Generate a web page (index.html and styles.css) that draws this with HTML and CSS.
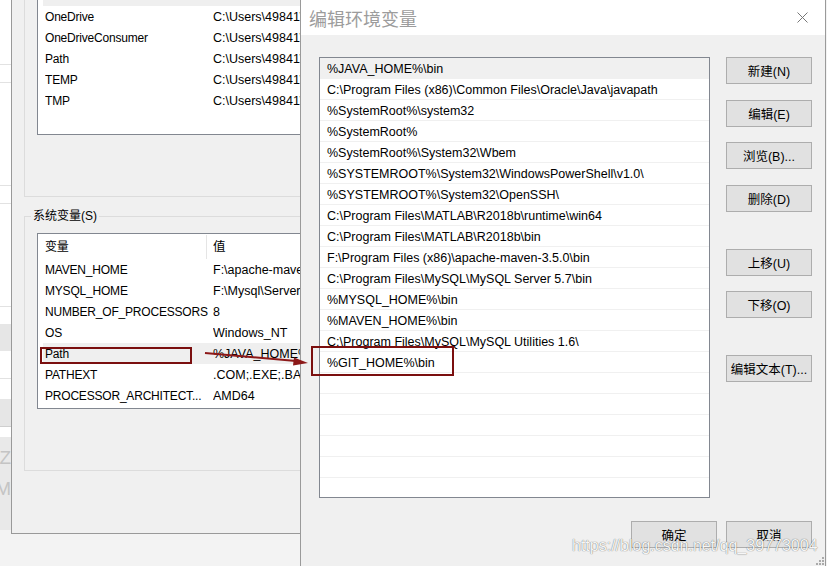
FILE: index.html
```html
<!DOCTYPE html>
<html lang="zh-CN">
<head>
    <meta charset="UTF-8">
    <title>编辑环境变量</title>
    <link rel="stylesheet" href="styles.css">
</head>
<body>
    <div class="far-window">
        <div class="band line" style="height:64px"></div>
        <div class="band line" style="height:17px"></div>
        <div class="band line" style="height:102px"></div>
        <div class="band line" style="height:17px"></div>
        <div class="band line" style="height:102px"></div>
        <div class="band" style="height:17px"></div>
        <div class="band grey" style="height:27px"></div>
        <div class="band line" style="height:27px"></div>
        <div class="band" style="height:20px"></div>
        <div class="band grey line-dark" style="height:27px"></div>
        <div class="band" style="height:10px"></div>
        <div class="band faded">
            <div class="ghost">Z</div>
            <div class="ghost">zM</div>
        </div>
    </div>

    <div class="env-window">
        <div class="user-group">
            <div class="varlist user-list">
                <div class="row sel"><span>HOME</span><span class="val">C:\Users\49841\</span></div>
                <div class="row"><span>OneDrive</span><span class="val">C:\Users\49841\OneDrive</span></div>
                <div class="row"><span>OneDriveConsumer</span><span class="val">C:\Users\49841\OneDrive</span></div>
                <div class="row"><span>Path</span><span class="val">C:\Users\49841\AppData\Local</span></div>
                <div class="row"><span>TEMP</span><span class="val">C:\Users\49841\AppData\Local\Temp</span></div>
                <div class="row"><span>TMP</span><span class="val">C:\Users\49841\AppData\Local\Temp</span></div>
            </div>
        </div>

        <fieldset class="sys-group">
            <legend>系统变量(S)</legend>
            <div class="varlist sys-list">
                <div class="row head"><span class="col">变量</span><span class="val">值</span></div>
                <div class="row"><span>MAVEN_HOME</span><span class="val">F:\apache-maven-3.5.0</span></div>
                <div class="row"><span>MYSQL_HOME</span><span class="val">F:\Mysql\Server 5.7</span></div>
                <div class="row"><span>NUMBER_OF_PROCESSORS</span><span class="val">8</span></div>
                <div class="row"><span>OS</span><span class="val">Windows_NT</span></div>
                <div class="row sel"><span>Path</span><span class="val">%JAVA_HOME%\bin;C:\Program Files</span></div>
                <div class="row"><span>PATHEXT</span><span class="val">.COM;.EXE;.BAT;.CMD;.VBS</span></div>
                <div class="row"><span>PROCESSOR_ARCHITECT...</span><span class="val">AMD64</span></div>
            </div>
        </fieldset>
    </div>

    <div class="dialog">
        <div class="titlebar">
            <span class="title">编辑环境变量</span>
            <svg class="close" width="11" height="11" viewBox="0 0 11 11">
                <path d="M0.5 0.5 L10.5 10.5 M10.5 0.5 L0.5 10.5" stroke="#777" stroke-width="1" fill="none"/>
            </svg>
        </div>
        <div class="dialog-body">
            <div class="path-list">
                <div class="path-row sel">%JAVA_HOME%\bin</div>
                <div class="path-row">C:\Program Files (x86)\Common Files\Oracle\Java\javapath</div>
                <div class="path-row">%SystemRoot%\system32</div>
                <div class="path-row">%SystemRoot%</div>
                <div class="path-row">%SystemRoot%\System32\Wbem</div>
                <div class="path-row">%SYSTEMROOT%\System32\WindowsPowerShell\v1.0\</div>
                <div class="path-row">%SYSTEMROOT%\System32\OpenSSH\</div>
                <div class="path-row">C:\Program Files\MATLAB\R2018b\runtime\win64</div>
                <div class="path-row">C:\Program Files\MATLAB\R2018b\bin</div>
                <div class="path-row">F:\Program Files (x86)\apache-maven-3.5.0\bin</div>
                <div class="path-row">C:\Program Files\MySQL\MySQL Server 5.7\bin</div>
                <div class="path-row">%MYSQL_HOME%\bin</div>
                <div class="path-row">%MAVEN_HOME%\bin</div>
                <div class="path-row">C:\Program Files\MySQL\MySQL Utilities 1.6\</div>
                <div class="path-row">%GIT_HOME%\bin</div>
                <div class="path-row"></div>
                <div class="path-row"></div>
                <div class="path-row"></div>
                <div class="path-row"></div>
                <div class="path-row"></div>
                <div class="path-row"></div>
            </div>
            <div class="side-buttons">
                <button class="btn">新建(N)</button>
                <button class="btn">编辑(E)</button>
                <button class="btn">浏览(B)...</button>
                <button class="btn">删除(D)</button>
                <button class="btn gap-big">上移(U)</button>
                <button class="btn">下移(O)</button>
                <button class="btn gap-big">编辑文本(T)...</button>
            </div>
            <div class="footer">
                <button class="btn">确定</button>
                <button class="btn">取消</button>
            </div>
        </div>
    </div>

    <!-- annotations drawn over the screenshot -->
    <svg class="marks" width="827" height="566" viewBox="0 0 827 566">
        <rect x="41" y="348" width="150" height="15" fill="none" stroke="#7b0f0f" stroke-width="2"/>
        <rect x="312" y="347" width="141" height="28" fill="none" stroke="#7b0f0f" stroke-width="2"/>
        <path d="M205 353 L296 361" stroke="#8c1818" stroke-width="2" fill="none"/>
        <path d="M308 363 L294 357.5 L293 365.5 Z" fill="#8c1818"/>
    </svg>

    <div class="watermark">https://blog.csdn.net/qq_39773004</div>

    <svg class="grip" width="10" height="10" viewBox="0 0 10 10">
        <rect x="7" y="1" width="2" height="2" fill="#aaa"/>
        <rect x="4" y="4" width="2" height="2" fill="#aaa"/>
        <rect x="7" y="4" width="2" height="2" fill="#aaa"/>
        <rect x="1" y="7" width="2" height="2" fill="#aaa"/>
        <rect x="4" y="7" width="2" height="2" fill="#aaa"/>
        <rect x="7" y="7" width="2" height="2" fill="#aaa"/>
    </svg>
</body>
</html>
```

FILE: styles.css
```css
body {
    margin: 0;
    width: 827px;
    height: 566px;
    overflow: hidden;
    position: relative;
    background-color: #f3f3f3;
    color: #000;
    font-family: "Liberation Sans", "Noto Sans CJK SC", sans-serif;
    font-size: 12.5px;
}

/* window far behind, only a strip shows */
.far-window {
    position: absolute;
    left: 0;
    top: 0;
    width: 11px;
    overflow: hidden;
}
.band {
    background-color: #fff;
}
.band.line {
    border-bottom: 1px solid #e2e2e2;
}
.band.line-dark {
    border-bottom: 1px solid #cfcfcf;
}
.band.grey {
    background-color: #e6e6e6;
}
.band.faded {
    height: 93px;
    background-color: #e9e9e9;
    padding-top: 5px;
    box-sizing: border-box;
}
.ghost {
    display: flex;
    justify-content: flex-end;
    white-space: nowrap;
    font-size: 19px;
    line-height: 31px;
    color: #c4c4c4;
}

/* environment variables window */
.env-window {
    position: absolute;
    left: 11px;
    top: -40px;
    width: 320px;
    height: 574px;
    box-sizing: border-box;
    border-left: 1px solid #999;
    border-bottom: 1px solid #999;
    background-color: #f0f0f0;
    padding-left: 12px;
    font-size: 12px;
    letter-spacing: -0.2px;
}
.user-group {
    height: 237px;
    box-sizing: border-box;
    border: 1px solid #dcdcdc;
    border-right: none;
    padding: 2px 0 0 12px;
}
.varlist {
    background-color: #fff;
    border: 1px solid #828790;
    border-right: none;
    box-sizing: border-box;
    overflow: hidden;
}
.user-list {
    height: 172px;
    padding-top: 21px;
}
.row {
    display: grid;
    grid-template-columns: 168px 1fr;
    height: 21px;
    line-height: 23px;
    margin-left: 5px;
    padding-left: 2px;
    white-space: nowrap;
    overflow: hidden;
}
.row span {
    overflow: hidden;
}
.row .val {
    font-size: 12.5px;
    letter-spacing: 0;
}
.row.sel {
    background-color: #efefef;
}
.sys-group {
    margin: 11px 0 0;
    padding: 0 0 61px 12px;
    border: 1px solid #dcdcdc;
    border-right: none;
    min-width: 0;
}
.sys-group legend {
    padding: 0 2px;
    margin-left: -6px;
    line-height: 17px;
    letter-spacing: 0;
}
.sys-list {
    height: 176px;
    margin-top: 8px;
    padding-top: 1px;
}
.row.head {
    height: 24px;
    line-height: 25px;
}
.row.head .col {
    width: 161px;
    border-right: 1px solid #e5e5e5;
}

/* edit dialog */
.dialog {
    position: absolute;
    left: 300px;
    top: 0;
    width: 526px;
    height: 566px;
    box-sizing: border-box;
    border-left: 1px solid #9a9a9a;
    border-right: 1px solid #9a9a9a;
    background-color: #f0f0f0;
}
.titlebar {
    height: 35px;
    background-color: #fff;
    display: flex;
    align-items: center;
    justify-content: space-between;
    padding: 0 17px 0 8px;
}
.title {
    font-family: "Noto Sans CJK SC", sans-serif;
    font-size: 18px;
    color: #9c9c9c;
}
.close {
    display: block;
}
.dialog-body {
    display: grid;
    grid-template-columns: 391px 86px;
    column-gap: 16px;
    padding: 22px 0 0 18px;
}
.path-list {
    height: 441px;
    background-color: #fff;
    border: 1px solid #828790;
    box-sizing: border-box;
    overflow: hidden;
}
.path-row {
    height: 21px;
    box-sizing: border-box;
    border-bottom: 1px solid #f0f0f0;
    line-height: 22px;
    padding-left: 7px;
    white-space: nowrap;
    overflow: hidden;
}
.path-row.sel {
    background-color: #f0f0f0;
}
.side-buttons {
    display: flex;
    flex-direction: column;
    gap: 15.5px;
}
.btn {
    width: 86px;
    height: 27px;
    padding: 0;
    background-color: #e1e1e1;
    border: 1px solid #adadad;
    font-family: inherit;
    font-size: 12.5px;
    color: #000;
}
.btn.gap-big {
    margin-top: 21.5px;
}
.footer {
    grid-column: 1 / -1;
    display: flex;
    justify-content: flex-end;
    gap: 9px;
    margin-top: 23px;
}

.marks {
    position: absolute;
    left: 0;
    top: 0;
    pointer-events: none;
}
.watermark {
    position: absolute;
    left: 572px;
    top: 537px;
    font-family: "Liberation Sans", sans-serif;
    font-size: 16px;
    color: rgba(255, 255, 255, 0.95);
    text-shadow: 0 0 1px rgba(0, 0, 0, 0.45), 0 0 1px rgba(0, 0, 0, 0.3);
    white-space: nowrap;
}
.grip {
    position: absolute;
    left: 815px;
    top: 556px;
}
```
